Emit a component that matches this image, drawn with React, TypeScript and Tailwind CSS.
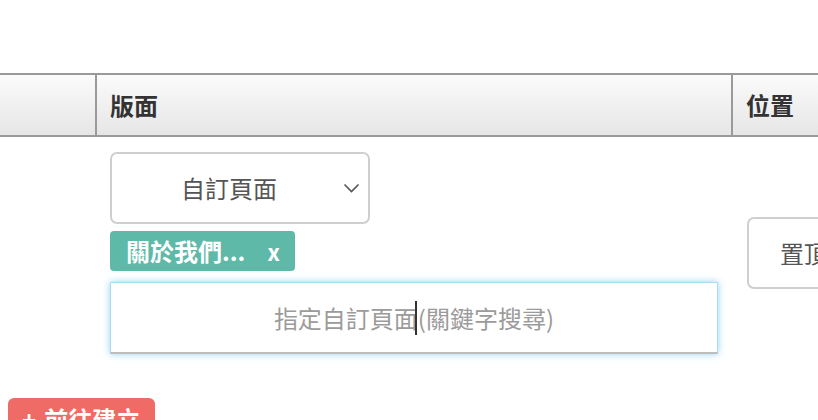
import React from "react";

const font = { fontFamily: '"Noto Sans CJK TC", "Noto Sans", sans-serif' };

export default function App() {
  return (
    <div className="w-[818px] h-[420px] overflow-hidden bg-white relative" style={font}>
      <div className="h-[73px]" />
      {/* header */}
      <div className="flex h-[64px] border-y-2 border-[#9a9a9a] bg-gradient-to-b from-[#fbfbfb] to-[#e6e6e6]">
        <div className="w-[97px] shrink-0 border-r-2 border-[#9a9a9a]" />
        <div className="w-[636px] shrink-0 border-r-2 border-[#9a9a9a] flex items-center pl-[13px]">
          <span className="text-[24px] font-bold text-[#333] leading-none">版面</span>
        </div>
        <div className="flex-1 flex items-center pl-[13px]">
          <span className="text-[24px] font-bold text-[#333] leading-none whitespace-nowrap">位置</span>
        </div>
      </div>
      {/* body row */}
      <div className="flex h-[231px]">
        <div className="w-[97px] shrink-0" />
        <div className="w-[636px] shrink-0 pt-[15px] pl-[13px] flex flex-col">
          <div className="w-[260px] h-[72px] rounded-[7px] border-2 border-[#cfcfcf] flex items-center relative">
            <span className="flex-1 text-center text-[24px] text-[#555] pr-[22px]">自訂頁面</span>
            <svg className="absolute right-[8px] top-[28px]" width="17" height="12" viewBox="0 0 17 12">
              <path d="M1.5 2.5 L8.5 9.5 L15.5 2.5" fill="none" stroke="#555" strokeWidth="1.6" />
            </svg>
          </div>
          <div className="mt-[7px] w-[185px] h-[40px] rounded-[4px] bg-[#5fb9a8] flex items-center text-white font-bold text-[24px] leading-none">
            <span className="pl-[16px]">關於我們...</span>
            <span className="ml-[22px] text-[22px] font-bold">x</span>
          </div>
          <div className="mt-[11px] w-[608px] h-[72px] border border-[#a9dcf1] border-b-2 border-b-[#bdbdbd] shadow-[0_0_7px_rgba(110,195,240,0.75)] relative flex items-center justify-center">
            <span className="text-[24px] text-[#9b9b9b] leading-none">指定自訂頁面(關鍵字搜尋)</span>
            <span className="absolute left-[304px] top-[18px] w-[2px] h-[34px] bg-[#333]" />
          </div>
        </div>
        <div className="flex-1 flex items-center pl-[14px]">
          <div className="w-[110px] h-[72px] shrink-0 rounded-[7px] border-2 border-[#cfcfcf] flex items-center pl-[31px]">
            <span className="text-[24px] text-[#555] whitespace-nowrap">置頂</span>
          </div>
        </div>
      </div>
      {/* bottom red button */}
      <div className="pl-[8px] pt-[30px]">
        <div className="w-[147px] h-[44px] rounded-[6px] bg-[#ee6b66] flex items-start pt-[9px] pl-[14px] text-white font-bold text-[24px] leading-none">
          <span className="mr-[8px]">+</span>
          <span>前往建立</span>
        </div>
      </div>
    </div>
  );
}
